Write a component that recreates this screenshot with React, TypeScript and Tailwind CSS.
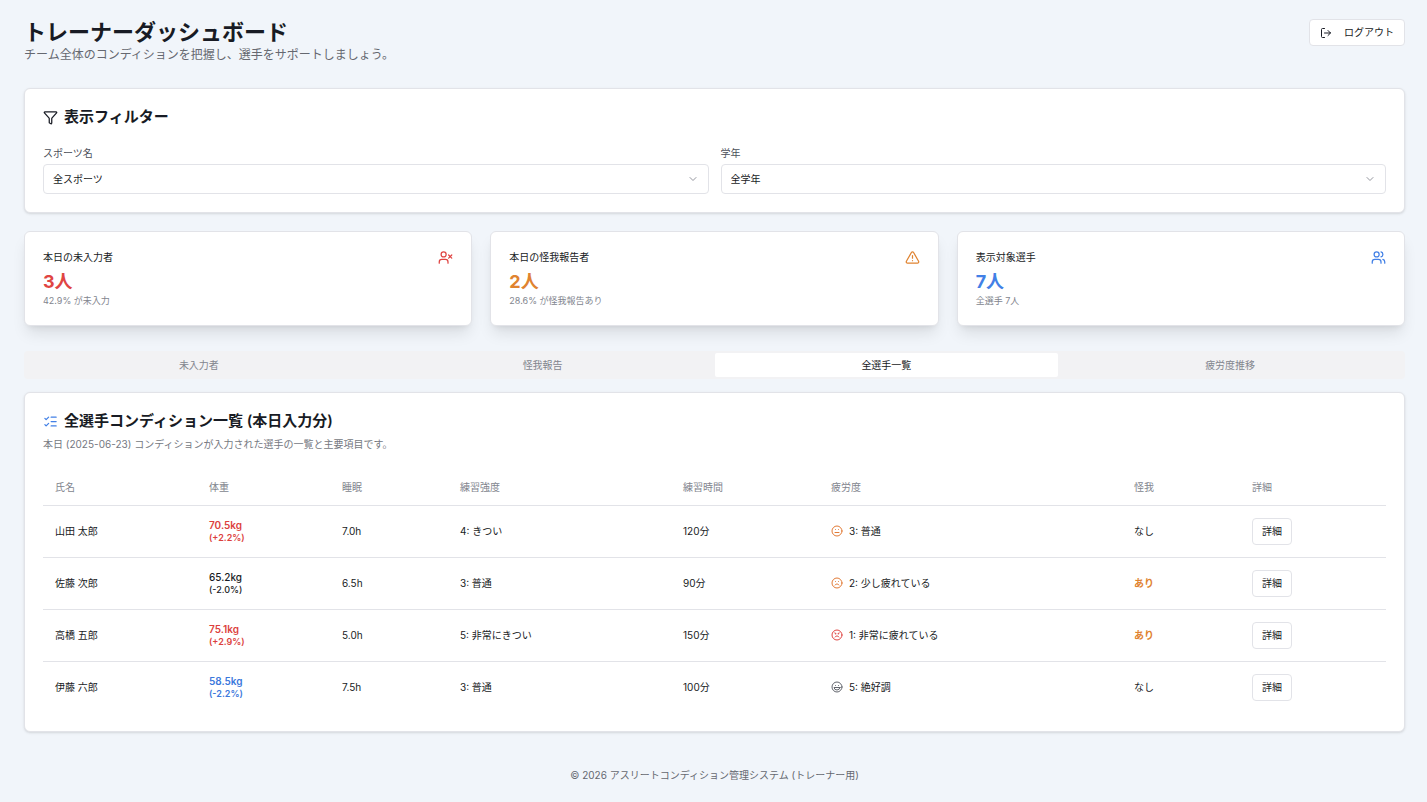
import { useState } from 'react';
import {
  Angry,
  ChevronDown,
  Filter,
  Frown,
  Laugh,
  ListChecks,
  LogOut,
  LucideIcon,
  Meh,
  TriangleAlert,
  Users,
  UserX,
} from 'lucide-react';

interface StatCardProps {
  title: string;
  value: string;
  note: string;
  icon: LucideIcon;
  color: string;
}

interface FilterSelectProps {
  id: string;
  label: string;
  options: string[];
}

interface Athlete {
  name: string;
  weight: string;
  change: string;
  weightClass: string;
  sleep: string;
  intensity: string;
  duration: string;
  fatigue: string;
  fatigueIcon: LucideIcon;
  fatigueColor: string;
  injured: boolean;
}

const tabs = ['未入力者', '怪我報告', '全選手一覧', '疲労度推移'];

const stats: StatCardProps[] = [
  { title: '本日の未入力者', value: '3人', note: '42.9% が未入力', icon: UserX, color: 'text-[#e04543]' },
  { title: '本日の怪我報告者', value: '2人', note: '28.6% が怪我報告あり', icon: TriangleAlert, color: 'text-[#e08330]' },
  { title: '表示対象選手', value: '7人', note: '全選手 7人', icon: Users, color: 'text-[#4280e6]' },
];

const columns = [
  { label: '氏名', width: 'w-[154px]' },
  { label: '体重', width: 'w-[133px]' },
  { label: '睡眠', width: 'w-[118px]' },
  { label: '練習強度', width: 'w-[223px]' },
  { label: '練習時間', width: 'w-[148px]' },
  { label: '疲労度', width: 'w-[303px]' },
  { label: '怪我', width: 'w-[118px]' },
  { label: '詳細', width: 'w-[146px]' },
];

const athletes: Athlete[] = [
  {
    name: '山田 太郎',
    weight: '70.5kg',
    change: '(+2.2%)',
    weightClass: 'font-semibold text-[#dc3f3d]',
    sleep: '7.0h',
    intensity: '4: きつい',
    duration: '120分',
    fatigue: '3: 普通',
    fatigueIcon: Meh,
    fatigueColor: 'text-[#e27a35]',
    injured: false,
  },
  {
    name: '佐藤 次郎',
    weight: '65.2kg',
    change: '(-2.0%)',
    weightClass: 'font-medium',
    sleep: '6.5h',
    intensity: '3: 普通',
    duration: '90分',
    fatigue: '2: 少し疲れている',
    fatigueIcon: Frown,
    fatigueColor: 'text-[#e27a35]',
    injured: true,
  },
  {
    name: '高橋 五郎',
    weight: '75.1kg',
    change: '(+2.9%)',
    weightClass: 'font-semibold text-[#dc3f3d]',
    sleep: '5.0h',
    intensity: '5: 非常にきつい',
    duration: '150分',
    fatigue: '1: 非常に疲れている',
    fatigueIcon: Angry,
    fatigueColor: 'text-[#e04543]',
    injured: true,
  },
  {
    name: '伊藤 六郎',
    weight: '58.5kg',
    change: '(-2.2%)',
    weightClass: 'font-semibold text-[#3b78dc]',
    sleep: '7.5h',
    intensity: '3: 普通',
    duration: '100分',
    fatigue: '5: 絶好調',
    fatigueIcon: Laugh,
    fatigueColor: 'text-[#62656d]',
    injured: false,
  },
];

const StatCard: React.FC<StatCardProps> = ({ title, value, note, icon: Icon, color }) => (
  <div className="rounded-md border border-[#e2e3e8] bg-white p-[18px] shadow-lg">
    <div className="flex items-center justify-between">
      <h3 className="text-[10px] leading-[15px]">{title}</h3>
      <Icon className={`size-[15px] ${color}`} />
    </div>
    <p className={`mt-[5px] text-[18px] leading-6 font-bold ${color}`}>{value}</p>
    <p className="text-[9px] leading-[13px] text-[#82858e]">{note}</p>
  </div>
);

const FilterSelect: React.FC<FilterSelectProps> = ({ id, label, options }) => (
  <div>
    <label htmlFor={id} className="mb-[3px] block text-[10px] leading-4 text-[#4b4f59]">
      {label}
    </label>
    <div className="relative">
      <select
        id={id}
        className="block h-[30px] w-full appearance-none rounded-[4px] border border-[#e2e3e8] bg-white px-[9px] text-[10px]"
      >
        {options.map((option) => (
          <option key={option}>{option}</option>
        ))}
      </select>
      <ChevronDown className="pointer-events-none absolute top-1/2 right-[10px] size-3 -translate-y-1/2 text-[#94969e]" />
    </div>
  </div>
);

const App = () => {
  const [activeTab, setActiveTab] = useState('全選手一覧');

  return (
    <div className="min-h-screen bg-[#f1f5fa] pt-[19px] pr-[22px] pb-[19px] pl-6 font-[Inter,'Noto_Sans_CJK_JP',sans-serif] text-[10px] text-[#181b24]">
      <header className="mb-6 flex items-start justify-between">
        <div>
          <h1 className="text-[22px] leading-[27px] font-bold">トレーナーダッシュボード</h1>
          <p className="text-[12px] leading-[18px] text-[#656870]">
            チーム全体のコンディションを把握し、選手をサポートしましょう。
          </p>
        </div>
        <button className="flex h-[27px] items-center gap-3 rounded-[4px] border border-[#e2e3e8] bg-white px-[10px]">
          <LogOut className="size-3" />
          ログアウト
        </button>
      </header>

      <section className="mb-[18px] rounded-md border border-[#e2e3e8] bg-white p-[18px] shadow-sm">
        <h2 className="mb-[18px] flex items-center gap-[6px] text-[15px] leading-5 font-semibold">
          <Filter className="size-[15px]" />
          表示フィルター
        </h2>
        <div className="grid grid-cols-2 gap-3">
          <FilterSelect id="sport" label="スポーツ名" options={['全スポーツ']} />
          <FilterSelect id="grade" label="学年" options={['全学年']} />
        </div>
      </section>

      <div className="mb-[25px] grid grid-cols-3 gap-[18px]">
        {stats.map((stat) => (
          <StatCard key={stat.title} {...stat} />
        ))}
      </div>

      <div role="tablist" className="mb-[13px] grid h-7 grid-cols-4 rounded-[4px] bg-[#f2f2f4] px-[3px] py-[2px]">
        {tabs.map((tab) => (
          <button
            key={tab}
            role="tab"
            aria-selected={tab === activeTab}
            onClick={() => setActiveTab(tab)}
            className={`rounded-[2px] ${tab === activeTab ? 'bg-white' : 'text-[#82858e]'}`}
          >
            {tab}
          </button>
        ))}
      </div>

      <section className="rounded-md border border-[#e2e3e8] bg-white p-[18px] shadow-sm">
        <h2 className="flex items-center gap-[6px] text-[15px] leading-5 font-semibold">
          <ListChecks className="size-[15px] text-[#4280e6]" />
          全選手コンディション一覧 (本日入力分)
        </h2>
        <p className="mt-[5px] mb-[18px] leading-4 text-[#757881]">
          本日 (2025-06-23) コンディションが入力された選手の一覧と主要項目です。
        </p>
        <table className="w-full table-fixed text-left">
          <thead>
            <tr className="h-[35px] border-b border-[#e2e3e8] text-[#82858e]">
              {columns.map(({ label, width }) => (
                <th key={label} className={`px-3 font-normal ${width}`}>
                  {label}
                </th>
              ))}
            </tr>
          </thead>
          <tbody>
            {athletes.map(({ fatigueIcon: FatigueIcon, ...athlete }) => (
              <tr key={athlete.name} className="h-[52px] border-b border-[#e2e3e8] last:border-b-0">
                <td className="px-3">{athlete.name}</td>
                <td className={`px-3 ${athlete.weightClass}`}>
                  <div className="leading-[14px]">{athlete.weight}</div>
                  <div className="text-[9px] leading-3">{athlete.change}</div>
                </td>
                <td className="px-3">{athlete.sleep}</td>
                <td className="px-3">{athlete.intensity}</td>
                <td className="px-3">{athlete.duration}</td>
                <td className="px-3">
                  <div className="flex items-center gap-[6px]">
                    <FatigueIcon className={`size-3 ${athlete.fatigueColor}`} />
                    {athlete.fatigue}
                  </div>
                </td>
                <td className="px-3">
                  {athlete.injured ? <span className="font-semibold text-[#e08330]">あり</span> : 'なし'}
                </td>
                <td className="px-3">
                  <button className="h-[27px] rounded-[4px] border border-[#e2e3e8] bg-white px-[9px]">
                    詳細
                  </button>
                </td>
              </tr>
            ))}
          </tbody>
        </table>
      </section>

      <footer className="mt-[35px] text-center leading-4 text-[#656870]">
        © 2026 アスリートコンディション管理システム (トレーナー用)
      </footer>
    </div>
  );
};

export default App;
